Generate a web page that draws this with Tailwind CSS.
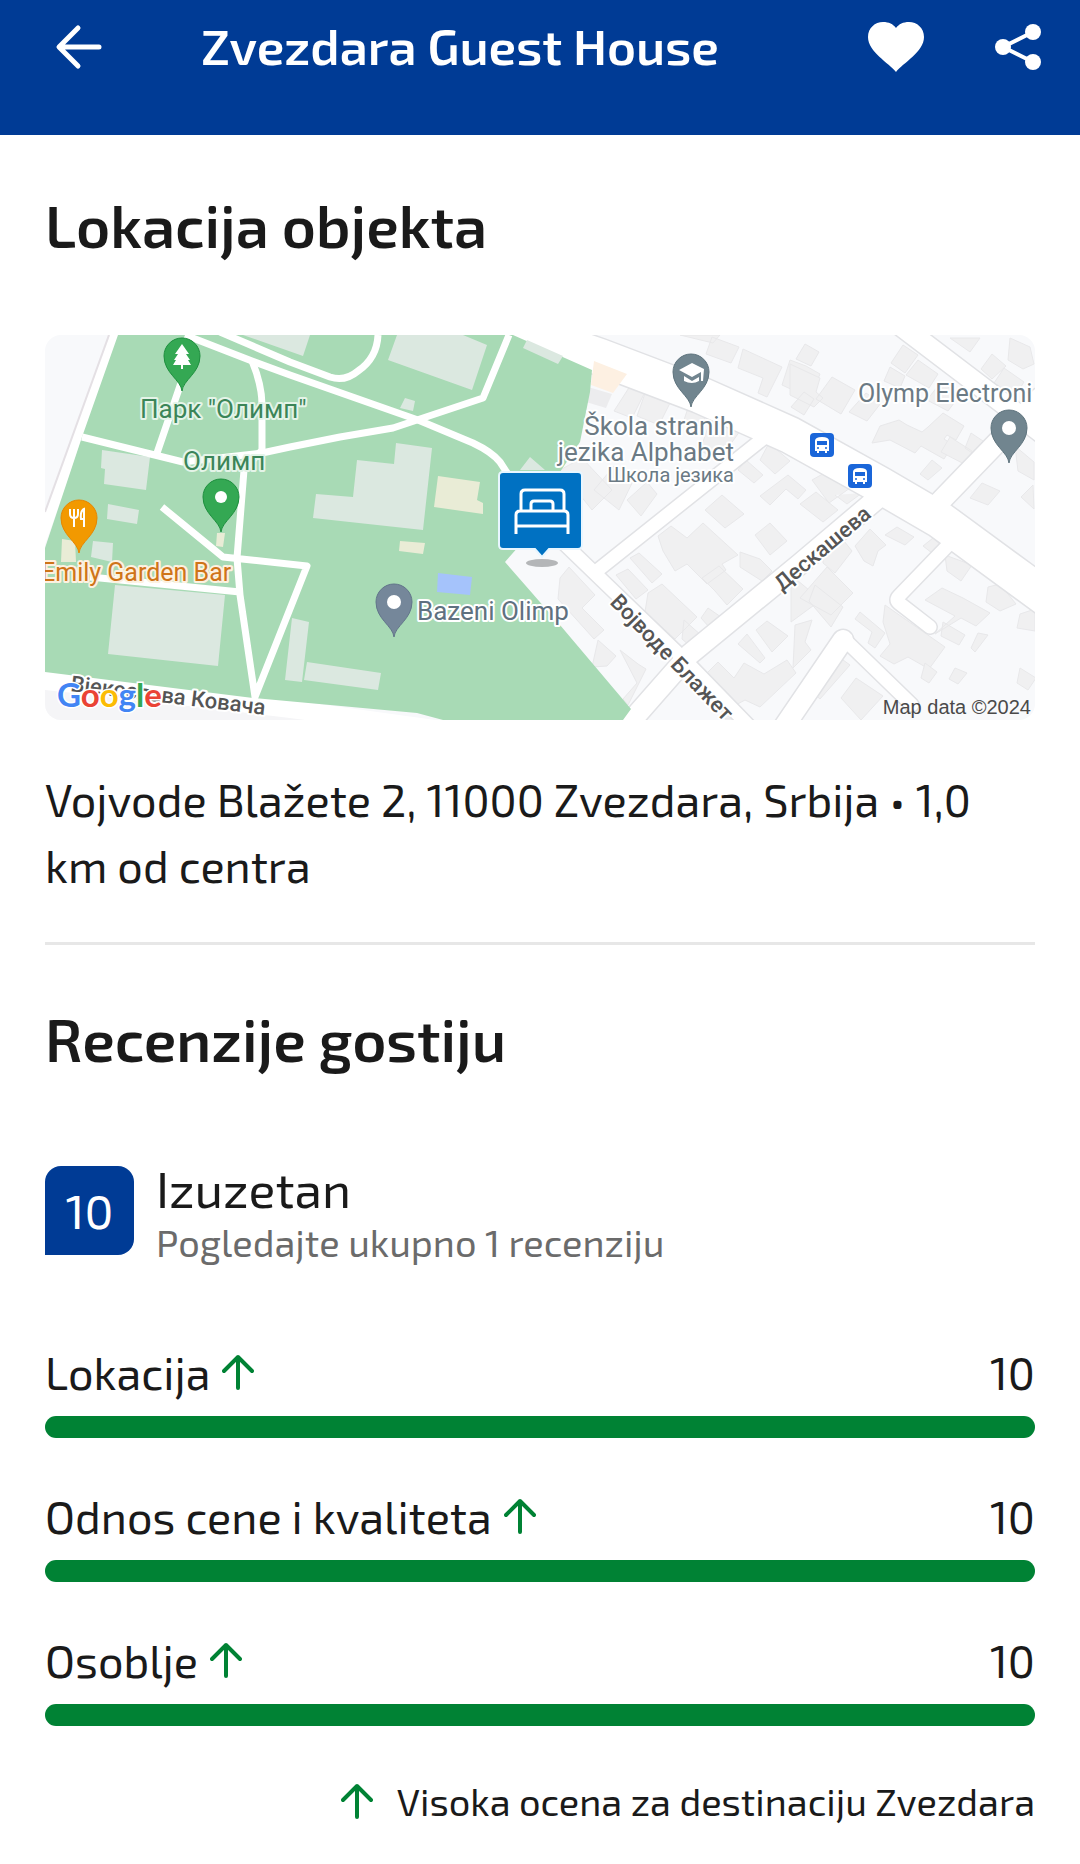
<!DOCTYPE html>
<html lang="sr">
<head>
    <meta charset="UTF-8">
    <meta name="viewport" content="width=device-width, initial-scale=1.0">
    <script src="https://cdn.jsdelivr.net/npm/@tailwindcss/browser@4"></script>
    <title>Zvezdara Guest House</title>
</head>
<body class="bg-white text-[#1a1a1a] font-['Exo_2','Open_Sans',sans-serif]">
    <header class="bg-[#003b95] text-white flex items-center pl-[54px] pr-[38px] pb-[42px] h-[135px]">
        <button type="button" aria-label="Nazad" class="shrink-0">
            <svg class="w-12 h-12" viewBox="0 0 48 48" fill="none" stroke="currentColor" stroke-width="5" stroke-linecap="round" stroke-linejoin="round"><path d="M45 24H6M24 5 5 24l19 19"/></svg>
        </button>
        <h1 class="grow pl-[99px] pb-1 text-[50px] leading-[60px] font-semibold whitespace-nowrap">Zvezdara Guest House</h1>
        <div class="flex items-center gap-[70px] shrink-0">
            <button type="button" aria-label="Sačuvaj">
                <svg class="w-14 h-[50px]" viewBox="0 0 56 50" fill="currentColor"><path d="M28 50C21 41 0 30 0 15 0 6 7 0 15 0c6 0 10 2 13 6 3-4 7-6 13-6 8 0 15 6 15 15 0 15-21 26-28 35z"/></svg>
            </button>
            <button type="button" aria-label="Podeli">
                <svg class="w-12 h-12" viewBox="0 0 48 48" fill="currentColor"><path d="M39 9 9 24l30 15" fill="none" stroke="currentColor" stroke-width="4"/><circle cx="39" cy="9" r="8"/><circle cx="9" cy="24" r="8"/><circle cx="39" cy="39" r="8"/></svg>
            </button>
        </div>
    </header>

    <main class="px-[45px]">
        <section class="pb-11 border-b-3 border-[#e7e7e7]">
            <h2 class="pt-[54px] text-[59px] leading-[72px] font-semibold">Lokacija objekta</h2>
            <!-- Map -->
            <svg class="mt-[74px] w-full h-auto rounded-2xl" viewBox="45 335 990 385" role="img" aria-label="Mapa">
                <defs>
                    <path id="pin" d="M0 35C-1 24-18 17-18 0A18 18 0 1 1 18 0C18 17 1 24 0 35z"/>
                    <g id="bus">
                        <rect x="-12" y="-12" width="24" height="24" rx="4" fill="#1a66d9"/>
                        <path d="M-7 6V-4q0-4 7-4t7 4V6H5V8H3V6H-3V8H-5V6z" fill="#fff"/>
                        <path d="M-5-4H5V0H-5z" fill="#1a66d9"/>
                        <circle cx="-4" cy="3" r="1" fill="#1a66d9"/><circle cx="4" cy="3" r="1" fill="#1a66d9"/>
                    </g>
                    <path id="streets" d="M500 322 600 357 700 395 790 435 880 485 940 520 1045 597" />
                    <path id="lanes" d="M900 325 1050 439M930 512 1040 398M885 492 800 564 690 654 625 728M843 640 775 740" />
                    <path id="alleys" d="M765 437 598 570M548 528 607 585 683 658 750 727M845 640 912 705M955 538 899 596Q895 600 899 603L930 627" />
                </defs>
                <path d="M45 335h990v385H45z" fill="#f8f9fb"/>

                <!-- Houses -->
                <g fill="#f0f0f1" stroke="#e8e8ea">
                    <path d="M680 335h40l-7 8zM712 337l27 10-8 16-25-9zM743 349l39 18-15 30-9-4 5-15-25-10zM790 360l16 6 14 8-10 24-28-13z"/>
                    <path d="M632 383l14 7-14 28-18-7zM648 385l25 12-14 28-22-9zM689 405l18 8-6 13-17-6zM712 415l28 16-20 28-20-8z"/>
                    <path d="M805 344l14 8-8 14-15-7zM790 364l30 14-4 14 7 6-9 9-24-12zM804 392l10 7-10 16-13-8zM832 377l23 13-14 24-25-15zM866 393l15 10-14 18-18-9z"/>
                    <path d="M903 345l15 10-13 18-14-10zM890 367l15 9-5 12-16-7zM918 360l20 14-9 14-23-13zM941 382l19 13-12 16-21-11z"/>
                    <path d="M943 413l21 13-8 14-9-5-3 4 9 6-9 14-23-13-6 7-25-13-18 3 8-17 19-6 8 5 15 7 6-5z"/>
                    <path d="M950 437l22 14-4 15-27-14zM932 460l10 8-14 12-8-6zM971 433l12 8-8 14-10-7zM950 338h30l-10 14zM992 354l14 12-14 13-11-10zM1010 338l20 9 4 17-11 5-15-9zM1004 368l20 14-9 14-21-13z"/>
                    <path d="M982 483l18 8-12 14-18-7zM1033 485l-12 12 13 12zM1015 446l19 16v18l-16-9z"/>
                    <path d="M769 443l21 18-15 13-15-14zM788 475l18 15-8 9-12-10-16 16-10-9zM812 480l16-9 22 17-21 15zM722 495l22 19-19 14-20-18zM746 460l17 15-9 8-16-13zM800 504l16-12 22 18-15 12zM835 495l12 9 15-11"/>
                    <path d="M658 536l13-10 16 12 16-15 35 32-16 9 4 6-19 14-20-20-12 7-12-20zM630 558l9-5 23 21-10 9zM616 575l12-6 20 21-12 9zM740 552l20 7 12 12-10 10-22-14zM702 578l17-12 24 23-16 16-12-14z"/>
                    <path d="M648 593l14-9 35 33-22 22-30-27zM684 620l18 16 6 8-9 10-17-15zM708 608l13 9-12 10-8-9zM755 535l15-12 17 18-17 14zM560 578l9-11 26 28-13 13 22 22-10 9-36-40zM598 640l18 16-9 10-15 1zM620 650l18 14 8 5-18 36-5-6 14-16z"/>
                    <path d="M756 630l11-9 21 15-16 16zM738 644l9-10 18 24-5 5zM707 673l11-11 16 16 10-15 20 11 23-14 9 13-36 34-15-7-11 6 5 13h-14l-7-15zM791 575l30 25-30 22z"/>
                    <path d="M823 563l12 10 17-22-8-10-12-6-8 10zM800 598l27-31 26 26-22 22zM855 546l15-17 16 16-8 6-5 15-9-5zM885 535l12-8 17 10-9 8zM923 546l10-8 8 7-9 8zM815 585l28 22-12 20-22-26zM795 625l17-5-7 22 6 8-18 18z"/>
                    <path d="M860 612l25 21-10 15-7-5 4-11-17-13zM885 605l60 42-16 22-21-12-14 7-14-8 10-12-7-22zM925 600l17-12 21 10 27 15-14 13-15-8-26 16 20-18zM945 555l27 10-11 16-14-10zM988 587l12-3 16 20-16 7-14-9zM1020 614l15-5v22l-18-3zM943 622l22 13-6 10-18-9zM978 633l10 2-13 17-4-4z"/>
                    <path d="M832 652l18 13-30 34-16-14zM856 678l27 18-22 24-20-22zM925 663l12 9-8 11-8-5zM955 668l12 5-9 11-9-5zM1020 668l16 10-8 12-11-7z"/>
                    <path d="M560 470l22-12 30 32-20 20zM594 490l20-24 20 13-15 31zM627 500l20-18 10 12-16 22z"/>
                    <path d="M45 700l45 3-22 17H60z"/>
                </g>

                <!-- Roads -->
                <g fill="none" stroke="#e1e2e5" stroke-linecap="round">
                    <use href="#streets" stroke-width="39"/>
                    <use href="#lanes" stroke-width="23"/>
                    <use href="#alleys" stroke-width="16"/>
                </g>
                <g fill="none" stroke="#fff" stroke-linecap="round">
                    <use href="#streets" stroke-width="36"/>
                    <use href="#lanes" stroke-width="20"/>
                    <use href="#alleys" stroke-width="13"/>
                </g>
                <path d="M594 361l33 13-14 19-22-8z" fill="#fdf0e2"/>
                <path d="M588 387l24 7-6 14-20-6z" fill="#ececee"/>
                <path d="M45 670 290 700 450 722H45z" fill="#fff"/>
                <path d="M45 690 120 698 290 718 320 722H45z" fill="#f5f5f7"/>

                <!-- Park -->
                <path d="M110 335 43 515V550L120 335z" fill="#fff"/>
                <path d="M109 335 45 512" stroke="#e4e0e4" stroke-width="2"/>
                <path d="M118 335H513L592 370 590 392 580 442 558 475 520 545 505 562 560 625 631 709 623 720H443L417 713 253 698 45 672V548L82 437z" fill="#a8dab5"/>
                <g fill="#dbe8e0">
                    <path d="M102 450l48 7-4 33-42-6 1-15-4-1zM108 504l31 6-2 14-30-5zM115 585l110 10-7 71-110-12zM93 541l20 2-1 19-21-5z"/>
                    <path d="M292 618l17 4-7 60-17-2zM307 662l74 11-3 17-74-10zM397 335h66l24 10-15 45-84-30zM405 398l10 3-2 10-13-3zM396 443l36 5-9 82-110-12 3-24 37 3 4-37 37 4zM530 457l15 13h-25zM243 335h67l-7 21zM527 340l36 16-5 8-35-16z"/>
                </g>
                <path d="M62 539l13 2 1 21H61zM217 533h8l-2 14-7-1zM400 541l25 2-2 11-24-3zM438 476l42 6-3 18 6 3v11l-49-7z" fill="#e9ecd6"/>
                <path d="M438 573l34 4-2 18-33-3z" fill="#a5c3fb"/>
                <g fill="none" stroke="#fff" stroke-width="7" stroke-linejoin="round">
                    <path d="M185 335 252 361 290 375 418 420 473 443Q492 452 500 462L515 485"/>
                    <path d="M220 332 290 362 330 377Q345 382 358 371 377 358 378 335"/>
                    <path d="M509 335 483 398 417 420 393 428 340 437 290 447 262 453 183 462 82 437"/>
                    <path d="M252 361Q262 385 262 405V450L244 470 237 558 240 595 255 697 307 566 223 557 162 507M182 380 157 453M90 577 240 592"/>
                </g>

                <!-- Markers -->
                <g stroke-width="1">
                    <use href="#pin" x="182" y="356" fill="#34a853" stroke="#1e8e3e"/>
                    <path d="M182 344l7 10h-3l4 6h-2l3 5h-8v4h-2v-4h-8l3-5h-2l4-6h-3z" fill="#fff"/>
                    <use href="#pin" x="221" y="497" fill="#34a853" stroke="#1e8e3e"/>
                    <circle cx="221" cy="497" r="6" fill="#fff"/>
                    <use href="#pin" x="79" y="518" fill="#f29900" stroke="#e58600"/>
                    <path d="M70 509v5q0 4 4 4t4-4v-5M74 509v18M84 527v-18q-4 2-3 10h3" fill="none" stroke="#fff" stroke-width="2"/>
                    <use href="#pin" x="691" y="372" fill="#71858f" stroke="#5f747e"/>
                    <path d="M679 370l13-7 12 6-1 12h-2v-9l-9 5zM684 376l8 5 7-4v4q-7 4-15 0z" fill="#fff"/>
                    <use href="#pin" x="1009" y="428" fill="#71858f" stroke="#5f747e"/>
                    <circle cx="1009" cy="428" r="7" fill="#fff"/>
                    <use href="#pin" x="394" y="602" fill="#75879a" stroke="#62758a"/>
                    <circle cx="394" cy="602" r="7" fill="#fff"/>
                    <use href="#bus" x="822" y="445"/>
                    <use href="#bus" x="860" y="476"/>
                </g>

                <!-- Labels -->
                <g class="font-['Roboto',sans-serif] text-[26px] [paint-order:stroke]" stroke="#fff" stroke-width="4" stroke-linejoin="round">
                    <text x="140" y="418" fill="#3b8558" stroke="#e4f4e8">Парк "Олимп"</text>
                    <text x="183" y="470" fill="#3b8558" stroke="#e4f4e8">Олимп</text>
                    <text x="41" y="581" fill="#cf7418" stroke="#fdf1e0" class="text-[25px]">Emily Garden Bar</text>
                    <text x="417" y="620" fill="#5f7180">Bazeni Olimp</text>
                    <text x="858" y="402" fill="#6b7a84" class="text-[25px]">Olymp Electroni</text>
                    <text x="734" y="435" fill="#6b7a84" text-anchor="end">Škola stranih</text>
                    <text x="734" y="461" fill="#6b7a84" text-anchor="end">jezika Alphabet</text>
                    <text x="734" y="482" fill="#6b7a84" text-anchor="end" class="text-[20px]">Школа језика</text>
                    <g fill="#555" class="text-[22px] font-medium">
                        <text transform="translate(70 691) rotate(7)">Вјекослава Ковача</text>
                        <text transform="translate(609 603) rotate(46)">Војводе Блажет</text>
                        <text transform="translate(782 592) rotate(-40)">Дескашева</text>
                    </g>
                </g>
                <text x="57" y="707" class="font-['Lato',sans-serif] text-[33px] font-bold [paint-order:stroke]" stroke="#fff" stroke-width="3"><tspan fill="#4285f4">G</tspan><tspan fill="#ea4335">o</tspan><tspan fill="#fbbc04">o</tspan><tspan fill="#4285f4">g</tspan><tspan fill="#34a853">l</tspan><tspan fill="#ea4335">e</tspan></text>
                <text x="1031" y="714" text-anchor="end" fill="#4a4a4a" class="font-['Liberation_Sans',sans-serif] text-[20px]">Map data ©2024</text>

                <!-- Hotel marker -->
                <ellipse cx="542" cy="563" rx="16" ry="4" fill="#b4b6b8"/>
                <path d="M503 472h75q4 0 4 4v69q0 4-4 4H549l-7 8-7-8H503q-4 0-4-4V476q0-4 4-4z" fill="#0071c2" stroke="#e8f6ff" stroke-width="2"/>
                <path d="M516 534V515q0-4 4-4h44q4 0 4 4v19M516 526h52M521 511V494q0-4 4-4h35q4 0 4 4v17M531 511v-7q0-3 3-3h16q3 0 3 3v7" fill="none" stroke="#fff" stroke-width="3"/>
            </svg>
            <p class="mt-[46px] text-[45px] leading-[66px]">Vojvode Blažete 2, 11000 Zvezdara, Srbija • 1,0 km od centra</p>
        </section>

        <section>
            <h2 class="pt-[58px] text-[59px] leading-[72px] font-semibold">Recenzije gostiju</h2>
            <a href="#ocene" class="mt-[77px] flex items-center gap-[22px]">
                <span class="size-[89px] shrink-0 rounded-2xl rounded-bl-none bg-[#003b95] text-white text-[48px] flex items-center justify-center">10</span>
                <span class="flex flex-col pt-2">
                    <span class="text-[50px] leading-[56px]">Izuzetan</span>
                    <span class="text-[38px] leading-[52px] text-[#6b6b6b]">Pogledajte ukupno 1 recenziju</span>
                </span>
            </a>

            <ul id="ocene" class="mt-[74px] flex flex-col gap-12">
                <li>
                    <div class="flex items-center text-[45px] leading-[60px]">
                        <span id="lokacija">Lokacija</span>
                        <svg class="ml-3 w-8 h-9 text-[#008234]" viewBox="0 0 32 36" fill="none" stroke="currentColor" stroke-width="4" stroke-linecap="round" stroke-linejoin="round"><path d="M16 34V3M2 17 16 3l14 14"/></svg>
                        <span class="ml-auto">10</span>
                    </div>
                    <div role="meter" aria-labelledby="lokacija" aria-valuenow="10" aria-valuemax="10" class="mt-[14px] h-[22px] rounded-full bg-[#008234]"></div>
                </li>
                <li>
                    <div class="flex items-center text-[45px] leading-[60px]">
                        <span id="odnos">Odnos cene i kvaliteta</span>
                        <svg class="ml-3 w-8 h-9 text-[#008234]" viewBox="0 0 32 36" fill="none" stroke="currentColor" stroke-width="4" stroke-linecap="round" stroke-linejoin="round"><path d="M16 34V3M2 17 16 3l14 14"/></svg>
                        <span class="ml-auto">10</span>
                    </div>
                    <div role="meter" aria-labelledby="odnos" aria-valuenow="10" aria-valuemax="10" class="mt-[14px] h-[22px] rounded-full bg-[#008234]"></div>
                </li>
                <li>
                    <div class="flex items-center text-[45px] leading-[60px]">
                        <span id="osoblje">Osoblje</span>
                        <svg class="ml-3 w-8 h-9 text-[#008234]" viewBox="0 0 32 36" fill="none" stroke="currentColor" stroke-width="4" stroke-linecap="round" stroke-linejoin="round"><path d="M16 34V3M2 17 16 3l14 14"/></svg>
                        <span class="ml-auto">10</span>
                    </div>
                    <div role="meter" aria-labelledby="osoblje" aria-valuenow="10" aria-valuemax="10" class="mt-[14px] h-[22px] rounded-full bg-[#008234]"></div>
                </li>
            </ul>

            <p class="mt-[50px] pb-8 flex items-center justify-end gap-6 text-[38px] leading-[50px]">
                <svg class="w-8 h-9 shrink-0 text-[#008234]" viewBox="0 0 32 36" fill="none" stroke="currentColor" stroke-width="4" stroke-linecap="round" stroke-linejoin="round"><path d="M16 34V3M2 17 16 3l14 14"/></svg>
                <span>Visoka ocena za destinaciju Zvezdara</span>
            </p>
        </section>
    </main>
</body>
</html>
